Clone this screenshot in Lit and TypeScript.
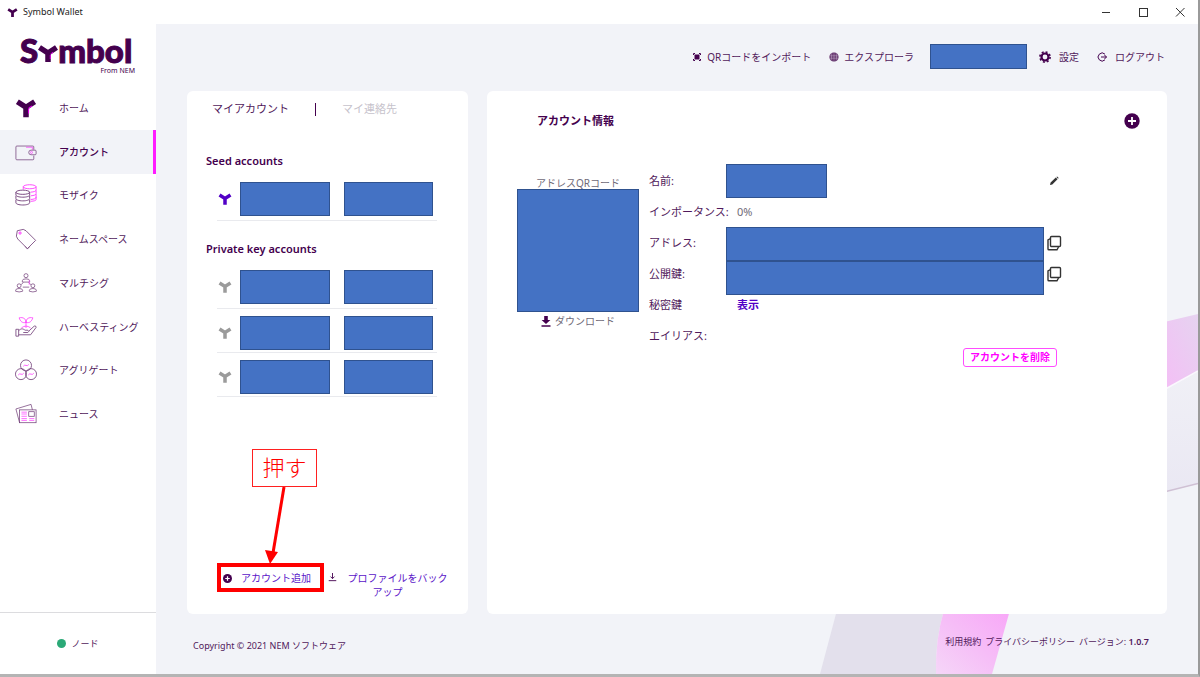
import { LitElement, html, css, svg } from "lit";
import { customElement, property } from "lit/decorators.js";
import { classMap } from "lit/directives/class-map.js";

const INK = "#44004e";
const PINK = "#ff00ff";

const mark = (fill: string) => svg`
  <path d="M2.600 5.200L12 11.200L21.400 5.200M12 10.500V22" fill="none" stroke=${fill} stroke-width="6"/>`;

const icons: Record<string, unknown> = {
  home: svg`<svg viewBox="0 0 24 24" width="22" height="22">${mark(INK)}
    <path d="M14.800 12.500v5.500M15 12L18.500 9.800" stroke="#e000ea" stroke-width="1.200" fill="none"/></svg>`,
  account: svg`<svg viewBox="0 0 24 24" width="22" height="22" fill="none" stroke=${INK} stroke-width=".8">
    <path d="M20.5 9.5V6.5a1 1 0 0 0-1-1H2a1 1 0 0 0-1 1V19.500a1 1 0 0 0 1 1H19.500a1 1 0 0 0 1-1V16"/>
    <path d="M12 6.800H19V9.500" stroke=${PINK}/>
    <path d="M17.500 10H22a1 1 0 0 1 1 1v3a1 1 0 0 1-1 1H17.500a2.500 2.500 0 0 1 0-5z"/>
    <circle cx="18" cy="12.500" r="1.100" stroke=${PINK}/></svg>`,
  mosaic: svg`<svg viewBox="0 0 24 24" width="22" height="22" fill="none" stroke-width="1">
    <g stroke=${PINK}><ellipse cx="16" cy="3" rx="7" ry="2.200"/>
      <path d="M9 3v3M23 3v3.500c0 1.200-2 2.200-6 2.400M23 7v3.500c0 1.200-2 2.200-6 2.400M23 11v3.500c0 1.200-2 2.200-6 2.400M23 14v3c0 1-2 1.700-6 1.900"/></g>
    <g stroke=${INK}><ellipse cx="8.500" cy="9" rx="7.500" ry="2.300"/>
      <path d="M1 9v3c0 1.300 3.300 2.400 7.500 2.400S16 13.300 16 12V9M1 13v3c0 1.300 3.300 2.400 7.500 2.400S16 17.300 16 16v-3M1 17v3.500c0 1.300 3.300 2.400 7.500 2.400S16 21.800 16 20.500V17"/></g></svg>`,
  namespace: svg`<svg viewBox="0 0 24 24" width="22" height="22" fill="none" stroke=${INK} stroke-width=".9">
    <path d="M2.500 3 L9 1.500 L12 3 L22.500 13.500 L13.500 22.500 L3 12 L1.500 9z"/>
    <path d="M11 20L13.500 23L16 20.500" stroke-width=".7"/>
    <circle cx="5.500" cy="5.500" r="1.300" stroke=${PINK} fill="#ff9cff"/></svg>`,
  multisig: svg`<svg viewBox="0 0 24 24" width="22" height="22" fill="none" stroke=${INK} stroke-width=".8">
    <circle cx="12" cy="4" r="2.200"/><path d="M8 11V9.500Q8 7.500 12 7.500T16 9.500V11z"/>
    <circle cx="4.500" cy="15" r="2.100"/><path d="M.700 21v-1Q.700 18 4.500 18T8.300 20v1Q4.500 22.500.700 21z"/>
    <circle cx="19.500" cy="15" r="2.100"/><path d="M15.700 21v-1q0-2 3.800-2t3.800 2v1q-3.800 1.500-7.600 0z"/>
    <path d="M6.500 14L9 11.500M17.500 14L15 11.500M8.500 16.500h7"/>
    <path d="M15.500 9v5" stroke=${PINK}/></svg>`,
  harvesting: svg`<svg viewBox="0 0 24 24" width="22" height="22" fill="none" stroke=${INK} stroke-width=".9">
    <g stroke=${PINK}><path d="M12 13V5.500M12 7C8 8 6 6 4.500 2 9 1 12 3 12 7C12 3 15 1 19.500 2 18 6 16 8 12 7M7 13q5-4 10 0"/></g>
    <path d="M1 14.500h3v7.500H1zM4 16C7 13 9 14 11 15.500h3q2 1.500 0 2.500H9M15 16.500L21 11q2.200-.700 2 1.500L17 20.500H4"/></svg>`,
  aggregate: svg`<svg viewBox="0 0 24 24" width="22" height="22" fill="none" stroke=${INK} stroke-width=".9">
    <circle cx="12" cy="7" r="6"/><circle cx="6.500" cy="16.500" r="6"/><circle cx="17.500" cy="16.500" r="6"/>
    <path d="M9 8q1.500-2 3-1t3-1M3.500 17.500q1.500-2 3-1t3-1M14.500 17.500q1.500-2 3-1t3-1" stroke=${PINK}/></svg>`,
  news: svg`<svg viewBox="0 0 24 24" width="22" height="22" fill="none" stroke=${INK} stroke-width=".8">
    <path d="M5 21.500L1 6.500L17.500 1.500L19 7.500"/><rect x="5" y="7.500" width="18" height="14"/>
    <rect x="15" y="9.500" width="6" height="5"/>
    <path d="M7 10h6M7 12h6M7 14.500h6M7 17h6M7 19h6M15.500 17h5.500M15.500 19h5.500" stroke=${PINK}/></svg>`,
  scan: svg`<svg viewBox="0 0 10 10" width="10" height="10" fill=${INK}>
    <rect x="2.500" y="2.500" width="5" height="5"/>
    <path d="M1.500 3V1.500H3M7 1.500H8.500V3M8.500 7V8.500H7M3 8.500H1.500V7" fill="none" stroke=${INK}/></svg>`,
  globe: svg`<svg viewBox="0 0 10 10" width="10" height="10"><circle cx="5" cy="5" r="4.600" fill="#56205f"/>
    <path d="M.500 3.300h9M.500 5h9M.500 6.700h9M5 .500v9M3 .800Q1.800 5 3 9.200M7 .800Q8.200 5 7 9.200" stroke="#c9b8d0" stroke-width=".5" fill="none"/></svg>`,
  gear: svg`<svg viewBox="0 0 12 12" width="12" height="12" fill="none" stroke=${INK}>
    <circle cx="6" cy="6" r="3.500" stroke-width="2.200"/>
    <circle cx="6" cy="6" r="5.100" stroke-width="1.600" stroke-dasharray="2 2.005"/></svg>`,
  logout: svg`<svg viewBox="0 0 10 10" width="10" height="10" fill="none" stroke=${INK} stroke-width="1">
    <path d="M8 2.200A4 4 0 1 0 8 7.800M4 5h5.500M7.500 3L9.500 5L7.500 7"/></svg>`,
  plus: svg`<svg viewBox="0 0 16 16" width="16" height="16"><circle cx="8" cy="8" r="7.700" fill=${INK}/>
    <path d="M8 4v8M4 8h8" stroke="#fff" stroke-width="1.800"/></svg>`,
  plusSmall: svg`<svg viewBox="0 0 16 16" width="9" height="9"><circle cx="8" cy="8" r="8" fill=${INK}/>
    <path d="M8 4v8M4 8h8" stroke="#fff" stroke-width="2.200"/></svg>`,
  save: svg`<svg viewBox="0 0 10 10" width="9" height="9" fill="none" stroke=${INK} stroke-width="1">
    <path d="M5 0v6M2.800 4L5 6.300L7.200 4M.800 8.500h8.400"/></svg>`,
  download: svg`<svg viewBox="0 0 10 11" width="10" height="11" fill=${INK}>
    <path d="M3.200 0h3.600v4h2.600L5 8 .600 4h2.600zM.500 9.300h9v1.500h-9z"/></svg>`,
  pencil: svg`<svg viewBox="0 0 10 10" width="10" height="10"><path d="M1 9l.600-2.400L6.800 1.600l1.700 1.700L3.300 8.400zM7.400 1l.700-.600 1.600 1.600-.700.700z" fill="#333"/></svg>`,
  copy: svg`<svg viewBox="0 0 16 16" width="16" height="16" fill="none" stroke="#333" stroke-width="1.400">
    <rect x="4.500" y="1.500" width="10" height="10" rx="1"/>
    <path d="M4.500 3.500L2 5v9a.800.800 0 0 0 .800.800H11L12.500 12"/></svg>`,
};

const NAV: [string, string][] = [
  ["home", "ホーム"],
  ["account", "アカウント"],
  ["mosaic", "モザイク"],
  ["namespace", "ネームスペース"],
  ["multisig", "マルチシグ"],
  ["harvesting", "ハーベスティング"],
  ["aggregate", "アグリゲート"],
  ["news", "ニュース"],
];

const base = css`
  :host, * { box-sizing: border-box; }
  svg { display: block; flex: none; }
  a { color: inherit; text-decoration: none; }
  button { font: inherit; color: inherit; background: none; border: 0; padding: 0; margin: 0; cursor: pointer; }
  h2, h3, p, ul, dl, dd { margin: 0; padding: 0; font: inherit; }
  ul { list-style: none; }
  .mask { background: #4472c4; border: 1px solid #2f528f; }
`;

@customElement("wallet-sidebar")
class WalletSidebar extends LitElement {
  @property() current = "account";
  static styles = [base, css`
    :host { display: flex; flex-direction: column; background: #fff; }
    .logo { padding: 10px 21px 0 20px; height: 62px; display: flex; flex-direction: column; color: #44004e; }
    .word { display: flex; align-items: flex-end; font: 900 33px/32px Lato, "Noto Sans", sans-serif; -webkit-text-stroke: 1px #44004e; }
    .word svg { margin: 0 0 4px; }
    .from { font-size: 7px; line-height: 10px; text-align: right; }
    .nav { display: grid; grid-template-rows: repeat(8, 1fr); height: 350px; }
    .item { display: flex; align-items: center; gap: 22px; height: 100%; padding-left: 15px; font-size: 10px; white-space: nowrap; }
    .active { background: #f2f3f8; border-right: 3px solid #ff1cff; font-weight: 500; color: #44004e; }
    .icon { opacity: .75; }
    .solid { opacity: 1; }
    .node { margin-top: auto; height: 62px; border-top: 1px solid #dcdcdf; display: flex; align-items: center; justify-content: center; gap: 5px; font-size: 9px; }
    .dot { width: 9px; height: 9px; border-radius: 50%; background: #2ba977; }
  `];
  render() {
    return html`
      <div class="logo">
        <div class="word"><span>S</span>
          <svg viewBox="0 0 20 18" width="20" height="18" fill="none" stroke=${INK} stroke-width="5.500">
            <path d="M1.500 3.500L10 9L18.500 3.500M10 8.500V18"/>
            <path d="M12.500 10L15 8.300M12.300 11v4" stroke="#e000ea" stroke-width="1"/>
          </svg><span>mbol</span></div>
        <span class="from">From NEM</span>
      </div>
      <nav><ul class="nav">
        ${NAV.map(([id, label]) => html`<li><a href="#${id}" class=${classMap({ item: true, active: id === this.current })}>
          <span class=${classMap({ icon: true, solid: id === "home" })}>${icons[id]}</span><span>${label}</span></a></li>`)}
      </ul></nav>
      <div class="node"><span class="dot"></span><span>ノード</span></div>`;
  }
}

@customElement("account-list")
class AccountList extends LitElement {
  static styles = [base, css`
    :host { display: flex; flex-direction: column; background: #fff; border-radius: 6px; padding: 11px 18px 15px; }
    .tabs { display: flex; align-items: center; font-size: 11px; line-height: 14px; padding-left: 7px; gap: 26px; }
    .tab { white-space: nowrap; }
    .bar { width: 1px; height: 13px; background: #44004e; }
    .muted { color: #c6c2cb; }
    .title { font-size: 11px; line-height: 16px; font-weight: 600; color: #44004e; padding-left: 1px; }
    .seed { margin-top: 37px; }
    .keys { margin-top: 20px; }
    .rows { margin: 8px 13px 0 12px; }
    .row { display: flex; align-items: center; gap: 14px; height: 44px; padding: 4px 4px 0 1px; border-bottom: 1px solid #e9eaee; }
    .row:first-child { padding-top: 0; }
    .lead { flex: 1; display: flex; align-items: center; gap: 8px; }
    .mask { height: 34px; flex: 1; }
    .masks { flex: 1; display: flex; gap: 14px; }
    .actions { margin-top: auto; display: flex; align-items: flex-start; font-size: 10px; line-height: 14px; color: #5a14c8; padding-left: 18px; }
    .add { position: relative; display: flex; align-items: center; gap: 9px; white-space: nowrap; }
    .backup { flex: 1; text-align: center; padding: 0 0 0 14px; }
    .backup svg { display: inline-block; margin-right: 11px; }
    .note { position: absolute; left: -6px; bottom: -7px; width: 107px; display: flex; flex-direction: column; align-items: center; pointer-events: none; color: #f00; }
    .tag { border: 1px solid #ff2020; background: #fff; width: 65px; height: 38px; font: 300 22px/32px "Noto Sans CJK JP", sans-serif; text-align: center; margin-left: 28px; }
    .arrow { margin-left: 14px; }
    .ring { width: 107px; height: 29px; border: 4px solid #f00; }
  `];
  private row(color: string) {
    return html`<li class="row"><div class="lead"><svg viewBox="0 0 24 24" width="14" height="14">${mark(color)}</svg>
      <div class="masks"><div class="mask"></div><div class="mask"></div></div></div></li>`;
  }
  render() {
    return html`
      <div class="tabs"><button class="tab">マイアカウント</button><span class="bar"></span><button class="tab muted">マイ連絡先</button></div>
      <h3 class="title seed">Seed accounts</h3>
      <ul class="rows">${this.row("#5200c6")}</ul>
      <h3 class="title keys">Private key accounts</h3>
      <ul class="rows">${[0, 1, 2].map(() => this.row("#9b9b9b"))}</ul>
      <div class="actions">
        <button class="add">${icons.plusSmall}<span>アカウント追加</span>
          <span class="note"><span class="tag">押す</span>
            <svg class="arrow" viewBox="0 0 40 76" width="40" height="76"><path d="M26 0L15 66" stroke="#f00" stroke-width="3" fill="none"/>
              <path d="M7 63L20 65L12 77z" fill="#f00"/></svg>
            <span class="ring"></span></span>
        </button>
        <button class="backup">${icons.save}プロファイルをバックアップ</button>
      </div>`;
  }
}

@customElement("account-details")
class AccountDetails extends LitElement {
  static styles = [base, css`
    :host { display: block; background: #fff; border-radius: 6px; padding: 21px 0; }
    .head { display: flex; justify-content: space-between; align-items: center; padding: 0 27px 0 50px; color: #44004e; }
    .title { font-size: 11px; line-height: 18px; font-weight: 700; }
    .body { display: grid; grid-template-columns: 122px 1fr; gap: 10px; padding: 35px 105px 0 30px; }
    .qr { display: flex; flex-direction: column; font-size: 10px; line-height: 14px; padding-top: 11px; color: #6f6a78; }
    .qr span { text-align: center; }
    .qr .mask { height: 123px; margin-top: -1px; }
    .get { display: flex; justify-content: center; align-items: center; gap: 4px; line-height: 18px; }
    .fields { display: grid; grid-template-columns: 77px 1fr 18px; grid-auto-rows: 31px; align-items: center; font-size: 11px; line-height: 16px; }
    dt { grid-column: 1; white-space: nowrap; }
    dd { grid-column: 2; }
    .short { width: 101px; height: 34px; }
    .inset { padding-left: 11px; color: #6f6a78; }
    .show { color: #5200c6; font-weight: 700; }
    .pair { grid-row: 3 / span 2; align-self: start; }
    .pair .mask { height: 34px; }
    .act { grid-column: 3; display: flex; justify-content: flex-end; }
    .edit { padding-right: 3px; }
    .r1 { grid-row: 1; } .r2 { grid-row: 2; } .r3 { grid-row: 3; } .r4 { grid-row: 4; } .r5 { grid-row: 5; } .r6 { grid-row: 6; }
    .foot { display: flex; justify-content: flex-end; padding-right: 110px; margin-top: -3px; }
    .delete { color: #ff00ff; border: 1px solid #ff4cff; border-radius: 3px; font-size: 10px; font-weight: 700; line-height: 17px; padding: 0 6px; white-space: nowrap; }
  `];
  render() {
    return html`
      <div class="head"><h2 class="title">アカウント情報</h2><button aria-label="追加">${icons.plus}</button></div>
      <div class="body">
        <div class="qr"><span>アドレスQRコード</span><div class="mask"></div>
          <button class="get">${icons.download}<span>ダウンロード</span></button></div>
        <dl class="fields">
          <dt class="r1">名前:</dt><dd class="r1"><div class="mask short"></div></dd>
          <dd class="act r1"><button class="edit" aria-label="編集">${icons.pencil}</button></dd>
          <dt class="r2">インポータンス:</dt><dd class="r2 inset">0%</dd>
          <dt class="r3">アドレス:</dt><dd class="pair"><div class="mask"></div><div class="mask"></div></dd>
          <dd class="act r3"><button aria-label="コピー">${icons.copy}</button></dd>
          <dt class="r4">公開鍵:</dt><dd class="act r4"><button aria-label="コピー">${icons.copy}</button></dd>
          <dt class="r5">秘密鍵</dt><dd class="r5 inset"><button class="show">表示</button></dd>
          <dt class="r6">エイリアス:</dt>
        </dl>
      </div>
      <div class="foot"><button class="delete">アカウントを削除</button></div>`;
  }
}

@customElement("app-root")
class AppRoot extends LitElement {
  static styles = [base, css`
    :host { display: grid; grid-template: 24px 1fr / 156px 1fr; height: 100vh; overflow: hidden; background: #fff; color: #51195b;
      border-right: 2px solid #9a9a9a; border-bottom: 3px solid #b4b4b4; font: 10px/14px "Noto Sans", "Noto Sans CJK JP", sans-serif; }
    .bar { grid-column: 1 / -1; display: flex; align-items: center; gap: 5px; padding: 0 12px 0 7px; font-size: 9px; color: #222; }
    .controls { margin-left: auto; display: flex; gap: 25px; }
    .main { position: relative; display: grid; grid-template-rows: 67px 1fr 60px; background: #f2f3f8; min-width: 0; }
    .art { position: absolute; right: 0; bottom: 0; }
    .top, .cards, .foot { position: relative; }
    .top { display: flex; align-items: center; justify-content: flex-end; padding: 0 33px 2px 0; }
    .link { display: flex; align-items: center; gap: 5px; white-space: nowrap; }
    .link + .link { margin-left: 18px; }
    .profile { width: 97px; height: 25px; margin: 0 12px 0 16px; }
    .wide { gap: 8px; }
    .cards { display: grid; grid-template-columns: 281fr 680fr; gap: 19px; padding: 0 31px; }
    .foot { display: flex; justify-content: space-between; align-items: flex-start; padding: 21px 49px 0 37px; font-size: 9px; }
    .copy { line-height: 22px; }
    .legal { display: flex; gap: 4px; }
    .ver b { font-weight: 600; }
  `];
  render() {
    return html`
      <header class="bar">
        <svg viewBox="0 0 24 24" width="11" height="11">${mark(INK)}</svg><span>Symbol Wallet</span>
        <div class="controls">
          <button aria-label="最小化"><svg width="12" height="12"><path d="M2 6.500h8" stroke="#333"/></svg></button>
          <button aria-label="最大化"><svg width="12" height="12"><rect x="2.500" y="2.500" width="8" height="8" fill="none" stroke="#333"/></svg></button>
          <button aria-label="閉じる"><svg width="12" height="12"><path d="M2 2l8.500 8.500M10.500 2L2 10.500" stroke="#333"/></svg></button>
        </div>
      </header>
      <wallet-sidebar></wallet-sidebar>
      <main class="main">
        <svg class="art" viewBox="780 300 418 374" width="418" height="374">
          <defs>
            <linearGradient id="a" x1="1" y1="0" x2="0" y2="1"><stop offset="0" stop-color="#e6d3f0"/><stop offset="1" stop-color="#f5bdf6"/></linearGradient>
            <linearGradient id="b" x1="0" y1="0" x2="0" y2="1"><stop offset="0" stop-color="#f0f0f6"/><stop offset="1" stop-color="#eae8f3"/></linearGradient>
            <linearGradient id="c" x1="1" y1="0" x2="0" y2="1"><stop offset="0" stop-color="#f8a6f8"/><stop offset=".5" stop-color="#f6bdf7"/><stop offset="1" stop-color="#f5d6f8"/></linearGradient>
          </defs>
          <path d="M1160 323L1198 314V371L1160 392z" fill="url(#a)"/>
          <path d="M1160 392L1198 371V484L1160 493z" fill="url(#b)"/>
          <path d="M1160 392L1198 371" stroke="#faf8fd" stroke-width="1.500"/>
          <path d="M1160 493L1198 483.500" stroke="#cfc0d4" stroke-width="1.300"/>
          <path d="M837 610H944Q935 640 936 674H820z" fill="#e3e0ec"/>
          <path d="M944 610H1010L992 674H936Q935 640 944 610z" fill="url(#c)"/>
        </svg>
        <div class="top">
          <a class="link" href="#scan">${icons.scan}<span>QRコードをインポート</span></a>
          <a class="link" href="#explorer">${icons.globe}<span>エクスプローラ</span></a>
          <div class="mask profile"></div>
          <a class="link wide" href="#settings">${icons.gear}<span>設定</span></a>
          <a class="link wide" href="#logout">${icons.logout}<span>ログアウト</span></a>
        </div>
        <div class="cards"><account-list></account-list><account-details></account-details></div>
        <footer class="foot">
          <span class="copy">Copyright © 2021 NEM ソフトウェア</span>
          <span class="legal"><a href="#terms">利用規約</a><a href="#privacy">プライバシーポリシー</a><span class="ver">バージョン: <b>1.0.7</b></span></span>
        </footer>
      </main>`;
  }
}
